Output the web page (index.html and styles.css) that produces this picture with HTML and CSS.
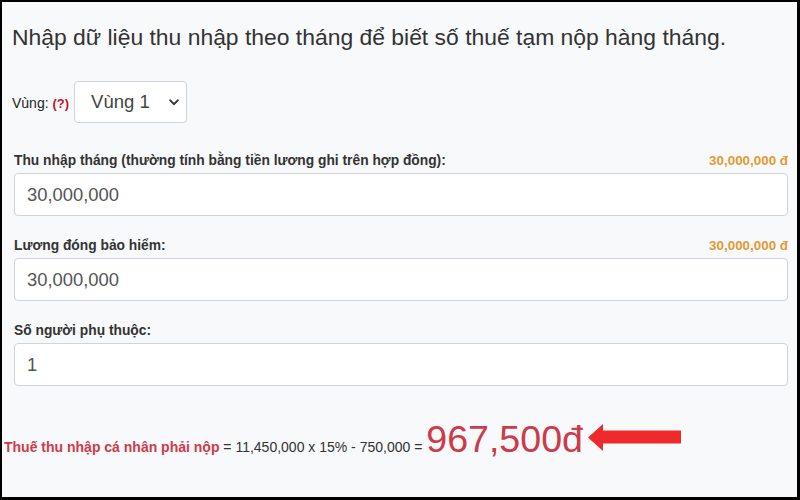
FILE: index.html
```html
<!DOCTYPE html>
<html lang="vi">
<head>
<meta charset="utf-8">
<title>Thuế thu nhập cá nhân</title>
<link rel="stylesheet" href="styles.css">
</head>
<body>
<div class="frame">
  <h1 class="title">Nhập dữ liệu thu nhập theo tháng để biết số thuế tạm nộp hàng tháng.</h1>

  <div class="region-row">
    <span class="region-label">Vùng: <b class="help">(?)</b></span>
    <div class="select">
      <span class="select-text">Vùng 1</span>
      <svg class="chevron" width="10" height="7" viewBox="0 0 10 7"><path d="M1.2 1.3 L5 5.2 L8.8 1.3" fill="none" stroke="#333" stroke-width="1.9" stroke-linecap="round" stroke-linejoin="round"/></svg>
    </div>
  </div>

  <div class="group first">
    <div class="label-row">
      <span class="label">Thu nhập tháng (thường tính bằng tiền lương ghi trên hợp đồng):</span>
      <span class="amount">30,000,000 đ</span>
    </div>
    <div class="input">30,000,000</div>
  </div>

  <div class="group">
    <div class="label-row">
      <span class="label">Lương đóng bảo hiểm:</span>
      <span class="amount">30,000,000 đ</span>
    </div>
    <div class="input">30,000,000</div>
  </div>

  <div class="group">
    <div class="label-row">
      <span class="label">Số người phụ thuộc:</span>
    </div>
    <div class="input">1</div>
  </div>

  <p class="result"><span class="result-label">Thuế thu nhập cá nhân phải nộp</span> = 11,450,000 x 15% - 750,000 = <span class="result-value">967,500đ</span><svg class="arrow" width="93" height="27" viewBox="0 0 93 27"><polygon points="0,13.5 15,0 15,6.5 93,6.5 93,19.5 15,19.5 15,27" fill="#ee2a2c"/></svg></p>
</div>
</body>
</html>
```

FILE: styles.css
```css
html, body {
  margin: 0;
  padding: 0;
}

body {
  width: 800px;
  height: 500px;
  overflow: hidden;
  font-family: "Liberation Sans", Arial, sans-serif;
  color: #333;
}

.frame {
  box-sizing: border-box;
  width: 800px;
  height: 500px;
  border-style: solid;
  border-color: #000;
  border-width: 2px 3px 3px 2px;
  background: #f8f9fa;
  padding-top: 21px;
  display: flex;
  flex-direction: column;
}

.title {
  margin: 0 0 0 10px;
  font-size: 22.9px;
  line-height: 28px;
  font-weight: normal;
  color: #333;
}

.region-row {
  display: flex;
  align-items: center;
  margin: 30px 0 0 10px;
}

.region-label {
  font-size: 14px;
  color: #222;
  margin-top: 1px;
}

.help {
  color: #c0142a;
  font-size: 13px;
}

.select {
  box-sizing: border-box;
  width: 113px;
  height: 42px;
  margin-left: 5px;
  background: #fff;
  border: 1px solid #ced4da;
  border-radius: 4px;
  display: flex;
  align-items: center;
  justify-content: space-between;
  padding: 0 7px 0 16px;
}

.select-text {
  font-size: 18.5px;
  color: #444;
}

.group {
  margin: 22px 9px 0 12px;
}

.group.first {
  margin-top: 30px;
}

.label-row {
  display: flex;
  justify-content: space-between;
  align-items: baseline;
  height: 16px;
  line-height: 16px;
  margin-bottom: 4px;
}

.label {
  font-size: 13.8px;
  font-weight: bold;
  color: #333;
}

.amount {
  font-size: 13.4px;
  font-weight: bold;
  color: #e39b33;
}

.input {
  box-sizing: border-box;
  height: 43px;
  background: #fff;
  border: 1px solid #ced4da;
  border-radius: 4px;
  padding: 0 12px;
  display: flex;
  align-items: center;
  font-size: 18.4px;
  color: #555;
}

.result {
  margin: 35px 0 0 2px;
  font-size: 14px;
  line-height: 1;
  color: #333;
  white-space: nowrap;
}

.result-label {
  color: #d03a4a;
  font-weight: bold;
}

.result-value {
  color: #cc3b4b;
  font-size: 37.6px;
  line-height: 37px;
}

.arrow {
  margin-left: 5px;
  vertical-align: 1px;
}
```
